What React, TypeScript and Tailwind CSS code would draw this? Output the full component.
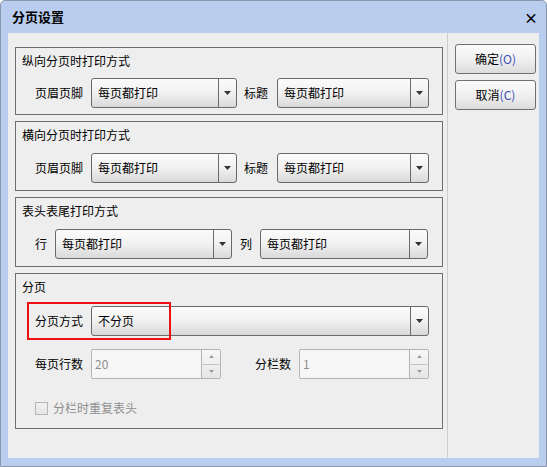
import React from "react";

const Arrow = () => (
  <svg width="7" height="4" viewBox="0 0 7 4">
    <path d="M0 0 H7 L3.5 4 Z" fill="#333" />
  </svg>
);

function Select({ w, text }: { w: number; text: string }) {
  return (
    <div
      className="h-[30px] flex items-stretch border border-[#6a6a6a] rounded-[3px] bg-gradient-to-b from-[#fbfbfb] via-[#f1f1f1] to-[#d9d9d9]"
      style={{ width: w }}
    >
      <div className="flex-1 flex items-center pl-[6px] text-[12px] text-black">{text}</div>
      <div className="w-[18px] border-l border-[#6a6a6a] flex items-center justify-center">
        <Arrow />
      </div>
    </div>
  );
}

function Spinner({ value }: { value: string }) {
  return (
    <div className="w-[130px] h-[30px] flex border border-[#b4b4b4] rounded-[2px] bg-[#f6f6f6]">
      <div className="flex-1 flex items-center pl-[3px] text-[12px] text-[#8c8c8c]">{value}</div>
      <div className="w-[19px] border-l border-[#b4b4b4] flex flex-col bg-gradient-to-b from-[#f7f7f7] to-[#e6e6e6]">
        <div className="flex-1 flex items-center justify-center border-b border-[#c4c4c4]">
          <svg width="5" height="3" viewBox="0 0 5 3">
            <path d="M0 3 H5 L2.5 0 Z" fill="#9a9a9a" />
          </svg>
        </div>
        <div className="flex-1 flex items-center justify-center">
          <svg width="5" height="3" viewBox="0 0 5 3">
            <path d="M0 0 H5 L2.5 3 Z" fill="#9a9a9a" />
          </svg>
        </div>
      </div>
    </div>
  );
}

function Group({ h, title, children }: { h: number; title: string; children: React.ReactNode }) {
  return (
    <div className="relative border border-[#6e6e6e] pl-[6px] pt-[5px]" style={{ height: h }}>
      <div className="h-[16px] leading-[16px] text-[12px] text-black">{title}</div>
      {children}
    </div>
  );
}

function Btn({ label, key2 }: { label: string; key2: string }) {
  return (
    <div className="w-[81px] h-[30px] flex items-center justify-center border border-[#707070] rounded-[3px] bg-gradient-to-b from-[#fbfbfb] via-[#f0f0f0] to-[#dcdcdc] text-[12px] text-black">
      {label}
      <span className="text-[#3c4fb8]">({key2})</span>
    </div>
  );
}

export default function App() {
  return (
    <div className="w-[547px] h-[467px] flex flex-col bg-[#b9cdef] border border-[#8a96ab] rounded-t-[5px] font-['SimSun','Noto_Sans_CJK_SC',sans-serif] select-none">
      <div className="h-[32px] flex items-center justify-between pl-[11px] pr-[8px]">
        <span className="text-[13px] font-bold text-black">分页设置</span>
        <span className="text-[14px] font-bold text-black leading-none">×</span>
      </div>
      <div className="flex-1 px-[7px] pb-[7px]">
        <div className="h-[425px] flex bg-[#eeeeee]">
          <div className="w-[440px] border-r border-[#cdcdcd] pt-[14px] pl-[7px] pr-[4px] flex flex-col gap-[6px]">
            <Group h={68} title="纵向分页时打印方式">
              <div className="mt-[9px] flex items-center pl-[13px]">
                <span className="w-[56px] text-[12px]">页眉页脚</span>
                <Select w={146} text="每页都打印" />
                <span className="w-[40px] pl-[7px] text-[12px]">标题</span>
                <Select w={152} text="每页都打印" />
              </div>
            </Group>
            <Group h={70} title="横向分页时打印方式">
              <div className="mt-[10px] flex items-center pl-[13px]">
                <span className="w-[56px] text-[12px]">页眉页脚</span>
                <Select w={146} text="每页都打印" />
                <span className="w-[40px] pl-[7px] text-[12px]">标题</span>
                <Select w={152} text="每页都打印" />
              </div>
            </Group>
            <Group h={70} title="表头表尾打印方式">
              <div className="mt-[10px] flex items-center pl-[13px]">
                <span className="w-[20px] text-[12px]">行</span>
                <Select w={177} text="每页都打印" />
                <span className="w-[28px] pl-[8px] text-[12px]">列</span>
                <Select w={168} text="每页都打印" />
              </div>
            </Group>
            <Group h={156} title="分页">
              <div className="mt-[11px] flex items-center pl-[13px]">
                <span className="w-[56px] text-[12px]">分页方式</span>
                <Select w={338} text="不分页" />
              </div>
              <div className="mt-[13px] flex items-center pl-[13px]">
                <span className="w-[56px] text-[12px]">每页行数</span>
                <Spinner value="20" />
                <span className="w-[78px] pl-[34px] text-[12px]">分栏数</span>
                <Spinner value="1" />
              </div>
              <div className="mt-[20px] flex items-center pl-[13px]">
                <div className="w-[13px] h-[13px] border border-[#b5b5b5] bg-gradient-to-b from-[#f2f2f2] to-[#e4e4e4]" />
                <span className="ml-[5px] text-[12px] text-[#8e8e8e]">分栏时重复表头</span>
              </div>
              <div className="absolute left-[11px] top-[28px] w-[144px] h-[38px] border-2 border-[#ee1111] pointer-events-none" />
            </Group>
          </div>
          <div className="flex-1 pt-[11px] pl-[7px] flex flex-col gap-[6px]">
            <Btn label="确定" key2="O" />
            <Btn label="取消" key2="C" />
          </div>
        </div>
      </div>
    </div>
  );
}
